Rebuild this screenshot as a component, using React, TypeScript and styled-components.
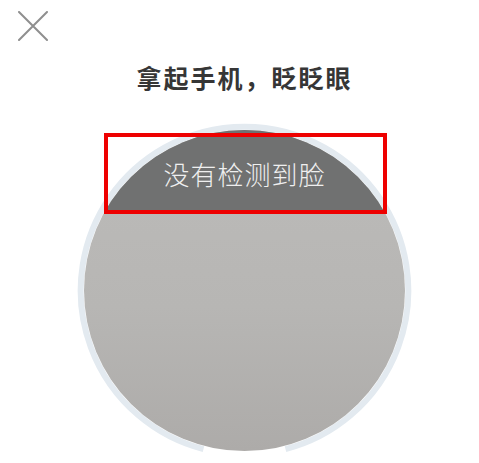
import styled, { createGlobalStyle } from 'styled-components';

const GlobalStyle = createGlobalStyle`
  html, body {
    margin: 0;
    padding: 0;
    background: #ffffff;
  }
  * {
    box-sizing: border-box;
  }
`;

const CloseIcon = () => (
  <svg width="30" height="30" viewBox="0 0 30 30" fill="none">
    <path d="M1 1 L29 29 M29 1 L1 29" stroke="#8f8f8f" strokeWidth="2" strokeLinecap="round" />
  </svg>
);

// ring around the camera view, open at the bottom
const Ring = () => {
  const r = 163.8;
  const c = 167.5;
  const gap = 14.5;
  const rad = (deg: number) => (deg * Math.PI) / 180;
  const sx = c - r * Math.sin(rad(gap));
  const ex = c + r * Math.sin(rad(gap));
  const y = c + r * Math.cos(rad(gap));
  return (
    <RingSvg width="335" height="335" viewBox="0 0 335 335">
      <path
        d={`M ${sx} ${y} A ${r} ${r} 0 1 1 ${ex} ${y}`}
        stroke="#e3eaf0"
        strokeWidth="6"
        fill="none"
        strokeLinecap="butt"
      />
    </RingSvg>
  );
};

const App = () => {
  return (
    <Page>
      <GlobalStyle />
      <TopBar>
        <CloseButton aria-label="close">
          <CloseIcon />
        </CloseButton>
      </TopBar>
      <Title>拿起手机，眨眨眼</Title>
      <Stage>
        <Ring />
        <Face>
          <Cap>没有检测到脸</Cap>
        </Face>
        <Highlight />
      </Stage>
    </Page>
  );
};

const Page = styled.div`
  width: 479px;
  height: 463px;
  overflow: hidden;
  background: #ffffff;
  display: flex;
  flex-direction: column;
`;

const TopBar = styled.div`
  display: flex;
  padding: 11px 0 0 18px;
`;

const CloseButton = styled.button`
  width: 30px;
  height: 30px;
  padding: 0;
  border: none;
  background: none;
  display: flex;
`;

const Title = styled.h1`
  margin: 24px 0 0 10px;
  font-family: 'Noto Sans CJK SC', sans-serif;
  font-size: 25px;
  line-height: 25px;
  font-weight: 700;
  letter-spacing: 2px;
  color: #363636;
  text-align: center;
`;

const Stage = styled.div`
  position: relative;
  width: 335px;
  height: 335px;
  margin: 33px 0 0 77px;
  padding: 7px;
`;

const RingSvg = styled.svg`
  position: absolute;
  left: 0;
  top: 0;
`;

const Face = styled.div`
  position: relative;
  width: 321px;
  height: 321px;
  border-radius: 50%;
  overflow: hidden;
  background: linear-gradient(180deg, #bcbbb9 0%, #b7b6b4 55%, #adaba9 100%);
`;

const Cap = styled.div`
  height: 82px;
  background: #707171;
  display: flex;
  align-items: center;
  justify-content: center;
  padding-top: 4px;
  font-family: 'Noto Sans CJK SC', sans-serif;
  font-size: 26px;
  font-weight: 300;
  letter-spacing: 1px;
  color: #efefef;
`;

const Highlight = styled.div`
  position: absolute;
  left: 27px;
  top: 10px;
  width: 283px;
  height: 81px;
  border: 4px solid #ee0000;
`;

export default App;
